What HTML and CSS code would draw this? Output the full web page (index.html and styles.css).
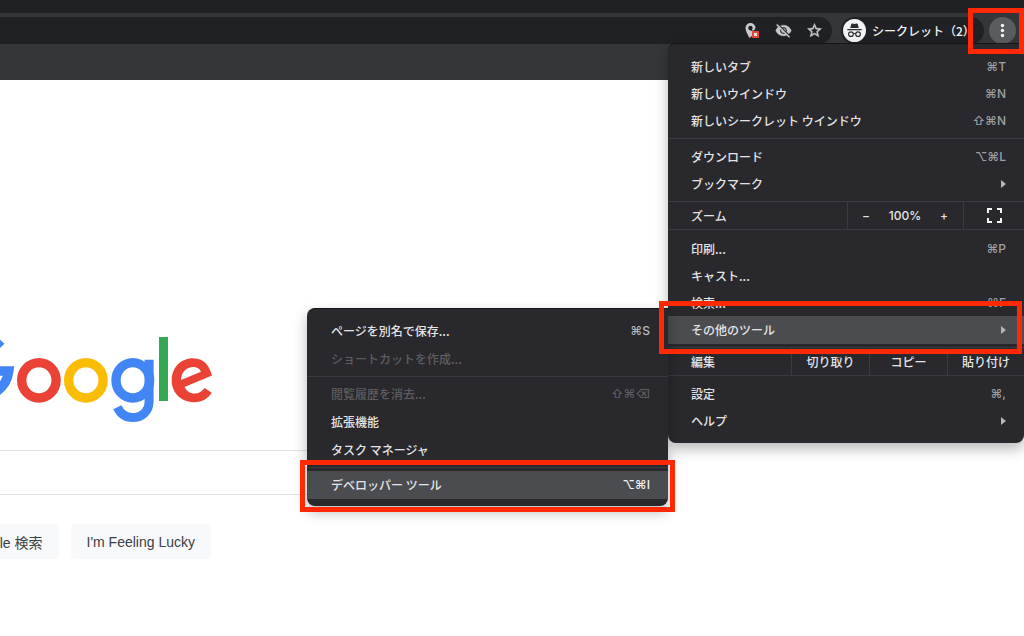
FILE: index.html
```html
<!DOCTYPE html>
<html lang="ja">
<head>
<meta charset="utf-8">
<title>Google</title>
<link rel="stylesheet" href="styles.css">
</head>
<body>
<header class="chrome">
  <div class="tabstrip"></div>
  <div class="toolbar">
    <div class="omnibox">
      <input class="address" type="text" aria-label="アドレス">
      <button class="icon-btn" aria-label="位置情報">
        <svg width="18" height="18" viewBox="0 0 18 18"><path fill="#c8c9cb" fill-rule="evenodd" d="M7.500 1A5 5 0 0 0 2.500 6c0 3.600 4 10 4 10l2.500-2V8.500h2L12.500 6a5 5 0 0 0-5-5zm0 2.800a2.200 2.200 0 0 1 1.500 3.800v1.400l-1.500-.6a2.300 2.300 0 0 1 0-4.600z"/><path fill="#e2453b" d="M9 9h7v7H9z"/><path stroke="#fff" stroke-width="1.300" d="m11.300 11.300 2.400 2.400m0-2.400-2.400 2.400"/></svg>
      </button>
      <button class="icon-btn" aria-label="Cookie をブロック">
        <svg width="17" height="17" viewBox="0 0 24 24"><path fill="#c8c9cb" stroke="#c8c9cb" stroke-width=".6" d="M12 7c2.760 0 5 2.240 5 5 0 .65-.13 1.260-.36 1.830l2.920 2.920c1.510-1.260 2.700-2.890 3.430-4.750-1.730-4.390-6-7.500-11-7.500-1.400 0-2.740.25-3.980.7l2.160 2.160C10.740 7.130 11.350 7 12 7zM2 4.270l2.280 2.280.46.46C3.080 8.300 1.780 10.020 1 12c1.730 4.390 6 7.500 11 7.500 1.550 0 3.030-.3 4.380-.84l.42.42L19.730 22 21 20.730 3.270 3 2 4.270zM7.530 9.800l1.550 1.550c-.05.21-.08.43-.08.650 0 1.660 1.340 3 3 3 .22 0 .44-.03.65-.08l1.550 1.550c-.67.33-1.410.53-2.200.53-2.760 0-5-2.240-5-5 0-.79.2-1.530.53-2.200zm4.310-.78 3.150 3.150.02-.16c0-1.660-1.340-3-3-3l-.17.01z"/></svg>
      </button>
      <button class="icon-btn" aria-label="ブックマークに追加">
        <svg width="17" height="17" viewBox="0 0 24 24"><path fill="#c8c9cb" stroke="#c8c9cb" stroke-width=".6" d="m22 9.240-7.190-.62L12 2 9.190 8.630 2 9.240l5.460 4.730L5.820 21 12 17.270 18.180 21l-1.630-7.030L22 9.240zM12 15.400l-3.760 2.270 1-4.280-3.320-2.880 4.380-.38L12 6.100l1.710 4.040 4.380.38-3.320 2.880 1 4.280L12 15.400z"/></svg>
      </button>
    </div>
    <button class="profile">
      <svg width="23" height="23" viewBox="0 0 24 24" aria-hidden="true"><circle cx="12" cy="12" r="12" fill="#f1f3f4"/><path fill="#2b2c2f" d="m7.500 9.500 1.200-4.200c.2-.7.900-.8 1.500-.5.800.4 2.800.4 3.600 0 .6-.3 1.300-.2 1.500.5l1.200 4.200zM4.500 10.500h15v1.300h-15z"/><g fill="none" stroke="#2b2c2f" stroke-width="1.200"><circle cx="8.300" cy="15.800" r="2.400"/><circle cx="15.700" cy="15.800" r="2.400"/><path d="M10.700 15.500q1.300-.8 2.600 0"/></g></svg>
      <span>シークレット（2）</span>
    </button>
    <button class="more" aria-label="メニュー">
      <svg width="5" height="15" viewBox="0 0 5 15"><g fill="#f1f3f4"><circle cx="2.500" cy="2.500" r="1.700"/><circle cx="2.500" cy="7.500" r="1.700"/><circle cx="2.500" cy="12.500" r="1.700"/></g></svg>
    </button>
  </div>
  <div class="bookmarks"></div>
</header>

<main class="page">
  <div class="search">
    <svg class="logo" width="272" height="95" viewBox="-59 330 272 95" role="img" aria-label="Google">
      <path fill="none" stroke="#4285f4" stroke-width="9.500" d="M-21 371H8.800A29.800 29.800 0 1 1 1 347"/>
      <ellipse cx="38.900" cy="380.300" rx="17.200" ry="17.700" fill="none" stroke="#ea4335" stroke-width="9.400"/>
      <ellipse cx="85.900" cy="380.300" rx="17.200" ry="17.700" fill="none" stroke="#fbbc05" stroke-width="9.400"/>
      <ellipse cx="132.800" cy="380.300" rx="16.800" ry="17.700" fill="none" stroke="#4285f4" stroke-width="9.400"/>
      <path fill="none" stroke="#4285f4" stroke-width="9" d="M117.300 407.300C120.500 414 126 417.500 132.500 417.500C142 417.500 149.100 411.500 149.100 401V359.800"/>
      <path fill="#34a853" d="M159 337h9v64h-9z"/>
      <path fill="#ea4335" fill-rule="evenodd" d="M212 375.500 184.500 387C187 391.500 190 393.500 194.500 393.500C199 393.500 202 391.500 204.500 388L211.700 392.800C208 398.500 202 402.300 194.500 402.300C181 402.300 171.700 392.500 171.700 380.500C171.700 367.500 181 358.300 193 358.300C205 358.300 210 367.500 212 375.500ZM181 380 201 371.700C199.800 369 197 367 193 367C187 367 181 372 181 380Z"/>
    </svg>
    <input class="query" type="text" aria-label="検索">
    <div class="actions">
      <button>Google 検索</button>
      <button>I'm Feeling Lucky</button>
    </div>
  </div>
</main>

<nav class="menu main-menu" aria-label="Chrome メニュー">
  <div class="group">
    <button class="row">新しいタブ<kbd>⌘T</kbd></button>
    <button class="row">新しいウインドウ<kbd>⌘N</kbd></button>
    <button class="row">新しいシークレット ウインドウ<kbd>⇧⌘N</kbd></button>
  </div>
  <div class="group">
    <button class="row">ダウンロード<kbd>⌥⌘L</kbd></button>
    <button class="row">ブックマーク<i class="arrow"></i></button>
  </div>
  <div class="tools zoom">
    <span class="label">ズーム</span>
    <div class="stepper">
      <button aria-label="縮小">−</button>
      <span>100%</span>
      <button aria-label="拡大">+</button>
    </div>
    <button class="full" aria-label="全画面表示">
      <svg width="15" height="15" viewBox="0 0 15 15"><path fill="none" stroke="#f1f3f4" stroke-width="2" d="M1 5V1h4M10 1h4v4M14 10v4h-4M5 14H1v-4"/></svg>
    </button>
  </div>
  <div class="group">
    <button class="row">印刷...<kbd>⌘P</kbd></button>
    <button class="row">キャスト...</button>
    <button class="row">検索...<kbd>⌘F</kbd></button>
    <button class="row active">その他のツール<i class="arrow"></i></button>
  </div>
  <div class="tools edit">
    <span class="label">編集</span>
    <button>切り取り</button>
    <button>コピー</button>
    <button>貼り付け</button>
  </div>
  <div class="group">
    <button class="row">設定<kbd>⌘,</kbd></button>
    <button class="row">ヘルプ<i class="arrow"></i></button>
  </div>
</nav>

<nav class="menu sub-menu" aria-label="その他のツール">
  <div class="group">
    <button class="row">ページを別名で保存...<kbd>⌘S</kbd></button>
    <button class="row" disabled>ショートカットを作成...</button>
  </div>
  <div class="group">
    <button class="row" disabled>閲覧履歴を消去...<kbd>⇧⌘⌫</kbd></button>
    <button class="row">拡張機能</button>
    <button class="row">タスク マネージャ</button>
  </div>
  <div class="group">
    <button class="row active">デベロッパー ツール<kbd>⌥⌘I</kbd></button>
  </div>
</nav>

<div class="mark mark-more"></div>
<div class="mark mark-tools"></div>
<div class="mark mark-dev"></div>
</body>
</html>
```
FILE: styles.css
```css
* { box-sizing: border-box; }

body {
  margin: 0;
  min-height: 100vh;
  position: relative;
  overflow: hidden;
  background: #fff;
  font-family: "Liberation Sans", "Noto Sans CJK JP", sans-serif;
}

button {
  border: 0;
  padding: 0;
  background: none;
  color: inherit;
  font: inherit;
}

/* Browser frame */
.chrome {
  background: #35363a;
  color: #f1f3f4;
}
.tabstrip {
  height: 13px;
  background: #202124;
}
.toolbar {
  display: flex;
  align-items: center;
  padding: 4px 8px 0 0;
}
.omnibox {
  flex: 1;
  display: flex;
  align-items: center;
  gap: 14px;
  height: 27px;
  padding-right: 9px;
  background: #202124;
  border-radius: 0 14px 14px 0;
}
.address {
  flex: 1;
  min-width: 0;
  border: 0;
  background: transparent;
  color: inherit;
}
.icon-btn { display: flex; }
.profile {
  display: flex;
  align-items: center;
  gap: 6px;
  width: 143px;
  height: 27px;
  margin: 0 5px 0 9px;
  padding-left: 2px;
  border-radius: 14px;
  background: #202124;
  font: 500 12px/27px "Noto Sans CJK JP", sans-serif;
  white-space: nowrap;
}
.profile svg { flex: none; }
.more {
  display: flex;
  align-items: center;
  justify-content: center;
  width: 27px;
  height: 27px;
  border-radius: 50%;
  background: #5b5c60;
}
.bookmarks { height: 36px; }

/* Search page */
.page { overflow: hidden; }
.search {
  display: flex;
  flex-direction: column;
  align-items: flex-end;
  width: 584px;
  margin-left: -215px;
  padding-top: 250px;
}
.logo { margin-right: 156px; }
.query {
  width: 100%;
  height: 45px;
  margin-top: 25px;
  padding: 0 24px;
  border: 1px solid #dfe1e5;
  border-radius: 23px;
}
.actions {
  display: flex;
  gap: 12px;
  margin: 29px 158px 0 0;
}
.actions button {
  height: 35px;
  padding: 0 16px;
  border-radius: 4px;
  background: #f8f9fa;
  color: #3c4043;
  font-size: 14px;
}

/* Menus */
.menu {
  position: absolute;
  background: #29282d;
  border-top: 1px solid #151518;
  color: #e4e4e6;
  font: 500 12px/20px "Noto Sans CJK JP", sans-serif;
  box-shadow: 0 6px 14px rgba(0, 0, 0, .28);
}
.main-menu {
  top: 43px;
  right: 0;
  width: 356px;
  padding: 5px 0 4px;
  border-radius: 8px 0 8px 8px;
}
.sub-menu {
  top: 308px;
  right: 356px;
  width: 361px;
  padding: 5px 0 4px;
  border-radius: 8px 0 8px 8px;
}
.group { padding: 4px 0; }
.main-menu .group:last-child { padding-bottom: 5px; }
.sub-menu .group { padding: 3px 0; }
.group + .group,
.tools,
.tools + .group { border-top: 1px solid #3a3b40; }
.row {
  display: flex;
  align-items: center;
  justify-content: space-between;
  width: 100%;
  height: 27px;
  padding: 0 18px 0 23px;
  text-align: left;
}
.sub-menu .row {
  height: 28px;
  padding-left: 24px;
}
.row.active {
  height: 28px;
  background: #4b4c50;
}
.main-menu .group:has(.active) {
  padding: 5px 0 3px;
}
.row:disabled,
.row:disabled kbd { color: #5d5d61; }
kbd {
  color: #9fa0a4;
  font: 500 12px/20px Inter, "DejaVu Sans", sans-serif;
}
.sub-menu kbd { color: #b4bac0; }
.row.active kbd { color: #f1f3f4; }
.arrow {
  border: solid transparent;
  border-width: 4px 0 4px 5px;
  border-left-color: #b5b6b9;
}
.tools {
  display: flex;
  height: 28px;
}
.tools > * + * { border-left: 1px solid #3a3b40; }
.label {
  flex: 1;
  padding-left: 23px;
  line-height: 27px;
}
.stepper {
  display: flex;
  align-items: center;
  justify-content: space-between;
  width: 116px;
  padding: 0 15px 0 14px;
  font-family: Inter, sans-serif;
}
.full {
  display: flex;
  align-items: center;
  justify-content: center;
  width: 61px;
}
.edit button { width: 78px; }
.edit button:last-child { width: 77px; }

/* Highlight frames */
.mark {
  position: absolute;
  border: 5px solid #ff2a05;
  pointer-events: none;
}
.mark-more {
  top: 8px;
  right: 0;
  width: 56px;
  height: 46px;
}
.mark-tools {
  top: 301px;
  right: 2px;
  width: 363px;
  height: 53px;
}
.mark-dev {
  top: 460px;
  right: 349px;
  width: 375px;
  height: 52px;
}
```
